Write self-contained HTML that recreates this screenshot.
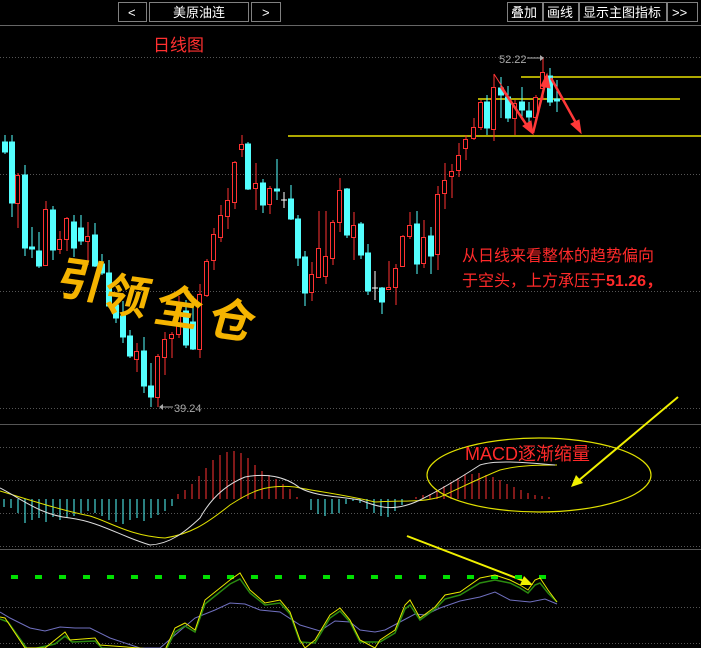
<!DOCTYPE html>
<html><head><meta charset="utf-8">
<style>
html,body{margin:0;padding:0;background:#000;width:701px;height:648px;overflow:hidden}
svg{display:block}
text{font-family:"Liberation Sans","Noto Sans CJK SC",sans-serif}
</style></head><body>
<svg width="701" height="648" viewBox="0 0 701 648" xmlns="http://www.w3.org/2000/svg">
<rect width="701" height="648" fill="#000"/>
<g fill="#000" stroke="#808080" stroke-width="1">
<rect x="118.5" y="2.5" width="28" height="19"/>
<rect x="149.5" y="2.5" width="99" height="19"/>
<rect x="251.5" y="2.5" width="29" height="19"/>
<rect x="507.5" y="2.5" width="35" height="19"/>
<rect x="543.5" y="2.5" width="35" height="19"/>
<rect x="579.5" y="2.5" width="87" height="19"/>
<rect x="667.5" y="2.5" width="30" height="19"/>
</g>
<g fill="#fff" font-size="13">
<text x="128" y="17">&lt;</text>
<text x="173" y="17">美原油连</text>
<text x="262" y="17">&gt;</text>
<text x="511" y="17">叠加</text>
<text x="547" y="17">画线</text>
<text x="583" y="17">显示主图指标</text>
<text x="672" y="17">&gt;&gt;</text>
</g>
<line x1="0" y1="25.5" x2="701" y2="25.5" stroke="#666"/>
<text x="153" y="51" fill="#ff3030" font-size="17">日线图</text>
<g stroke="#555" stroke-dasharray="1,2">
<line x1="0" y1="57.5" x2="701" y2="57.5"/>
<line x1="0" y1="174.5" x2="701" y2="174.5"/>
<line x1="0" y1="291.5" x2="701" y2="291.5"/>
<line x1="0" y1="408.5" x2="701" y2="408.5"/>
<line x1="0" y1="447.5" x2="701" y2="447.5"/>
<line x1="0" y1="480.5" x2="701" y2="480.5"/>
<line x1="0" y1="513.5" x2="701" y2="513.5"/>
<line x1="0" y1="546.5" x2="701" y2="546.5"/>
<line x1="0" y1="607.5" x2="701" y2="607.5"/>
<line x1="0" y1="643.5" x2="701" y2="643.5"/>
</g>
<line x1="0" y1="424.5" x2="701" y2="424.5" stroke="#555"/>
<line x1="0" y1="549.5" x2="701" y2="549.5" stroke="#555"/>
<g stroke="#e8e000" stroke-width="1.5">
<line x1="521" y1="77" x2="701" y2="77"/>
<line x1="478" y1="99" x2="680" y2="99"/>
<line x1="288" y1="136" x2="701" y2="136"/>
</g>
<g stroke-width="1">
<g stroke="#54ffff" fill="#54ffff">
<line x1="5" y1="135" x2="5" y2="154"/><rect x="2.5" y="142" width="5" height="10"/>
<line x1="12" y1="135" x2="12" y2="217"/><rect x="9.5" y="142" width="5" height="61"/>
<line x1="25" y1="165" x2="25" y2="256"/><rect x="22.5" y="175" width="5" height="73"/>
<line x1="32" y1="227" x2="32" y2="258"/><rect x="29.5" y="247" width="5" height="2"/>
<line x1="39" y1="232" x2="39" y2="268"/><rect x="36.5" y="251" width="5" height="15"/>
<line x1="53" y1="206" x2="53" y2="260"/><rect x="50.5" y="210" width="5" height="40"/>
<line x1="74" y1="215" x2="74" y2="257"/><rect x="71.5" y="222" width="5" height="26"/>
<line x1="81" y1="215" x2="81" y2="245"/><rect x="78.5" y="228" width="5" height="13"/>
<line x1="95" y1="223" x2="95" y2="267"/><rect x="92.5" y="235" width="5" height="31"/>
<line x1="102" y1="254" x2="102" y2="275"/><rect x="99.5" y="264" width="5" height="9"/>
<line x1="109" y1="260" x2="109" y2="308"/><rect x="106.5" y="273" width="5" height="33"/>
<line x1="116" y1="301" x2="116" y2="323"/><rect x="113.5" y="305" width="5" height="13"/>
<line x1="123" y1="301" x2="123" y2="343"/><rect x="120.5" y="316" width="5" height="21"/>
<line x1="130" y1="330" x2="130" y2="358"/><rect x="127.5" y="336" width="5" height="20"/>
<line x1="144" y1="337" x2="144" y2="393"/><rect x="141.5" y="351" width="5" height="35"/>
<line x1="151" y1="363" x2="151" y2="407"/><rect x="148.5" y="386" width="5" height="11"/>
<line x1="186" y1="300" x2="186" y2="348"/><rect x="183.5" y="311" width="5" height="34"/>
<line x1="193" y1="296" x2="193" y2="350"/><rect x="190.5" y="322" width="5" height="27"/>
<line x1="248" y1="142" x2="248" y2="190"/><rect x="245.5" y="144" width="5" height="45"/>
<line x1="263" y1="179" x2="263" y2="213"/><rect x="260.5" y="183" width="5" height="22"/>
<line x1="277" y1="159" x2="277" y2="200"/><rect x="274.5" y="189" width="5" height="2"/>
<line x1="291" y1="185" x2="291" y2="220"/><rect x="288.5" y="199" width="5" height="20"/>
<line x1="298" y1="215" x2="298" y2="266"/><rect x="295.5" y="219" width="5" height="39"/>
<line x1="305" y1="251" x2="305" y2="306"/><rect x="302.5" y="257" width="5" height="36"/>
<line x1="347" y1="188" x2="347" y2="238"/><rect x="344.5" y="189" width="5" height="46"/>
<line x1="361" y1="222" x2="361" y2="259"/><rect x="358.5" y="224" width="5" height="31"/>
<line x1="368" y1="244" x2="368" y2="295"/><rect x="365.5" y="253" width="5" height="38"/>
<line x1="382" y1="287" x2="382" y2="314"/><rect x="379.5" y="288" width="5" height="14"/>
<line x1="417" y1="211" x2="417" y2="274"/><rect x="414.5" y="224" width="5" height="40"/>
<line x1="431" y1="227" x2="431" y2="274"/><rect x="428.5" y="236" width="5" height="20"/>
<line x1="487" y1="95" x2="487" y2="135"/><rect x="484.5" y="102" width="5" height="26"/>
<line x1="501" y1="77" x2="501" y2="118"/><rect x="498.5" y="88" width="5" height="7"/>
<line x1="508" y1="86" x2="508" y2="122"/><rect x="505.5" y="97" width="5" height="21"/>
<line x1="522" y1="87" x2="522" y2="120"/><rect x="519.5" y="102" width="5" height="8"/>
<line x1="529" y1="102" x2="529" y2="130"/><rect x="526.5" y="111" width="5" height="6"/>
<line x1="550" y1="68" x2="550" y2="106"/><rect x="547.5" y="76" width="5" height="26"/>
<line x1="557" y1="80" x2="557" y2="112"/><rect x="554.5" y="99" width="5" height="2"/>
</g>
<g stroke="#fff"><line x1="284" y1="192" x2="284" y2="208"/><line x1="281" y1="200" x2="287" y2="200"/>
<line x1="375" y1="271" x2="375" y2="300"/><line x1="372" y1="288" x2="378" y2="288"/></g>
<g stroke="#ff3232" fill="#000">
<line x1="18" y1="173" x2="18" y2="228"/><rect x="15.5" y="175.5" width="4" height="28"/>
<line x1="46" y1="201" x2="46" y2="266"/><rect x="43.5" y="209.5" width="4" height="56"/>
<line x1="60" y1="231" x2="60" y2="254"/><rect x="57.5" y="239.5" width="4" height="10"/>
<line x1="67" y1="217" x2="67" y2="251"/><rect x="64.5" y="218.5" width="4" height="21"/>
<line x1="88" y1="222" x2="88" y2="265"/><rect x="85.5" y="236.5" width="4" height="5"/>
<line x1="137" y1="343" x2="137" y2="372"/><rect x="134.5" y="351.5" width="4" height="8"/>
<line x1="158" y1="354" x2="158" y2="407"/><rect x="155.5" y="356.5" width="4" height="41"/>
<line x1="165" y1="332" x2="165" y2="375"/><rect x="162.5" y="339.5" width="4" height="18"/>
<line x1="172" y1="332" x2="172" y2="358"/><rect x="169.5" y="334.5" width="4" height="4"/>
<line x1="179" y1="296" x2="179" y2="338"/><rect x="176.5" y="305.5" width="4" height="29"/>
<line x1="200" y1="284" x2="200" y2="358"/><rect x="197.5" y="294.5" width="4" height="55"/>
<line x1="207" y1="259" x2="207" y2="297"/><rect x="204.5" y="261.5" width="4" height="34"/>
<line x1="214" y1="228" x2="214" y2="270"/><rect x="211.5" y="234.5" width="4" height="26"/>
<line x1="221" y1="205" x2="221" y2="242"/><rect x="218.5" y="215.5" width="4" height="22"/>
<line x1="228" y1="188" x2="228" y2="229"/><rect x="225.5" y="200.5" width="4" height="16"/>
<line x1="235" y1="161" x2="235" y2="209"/><rect x="232.5" y="162.5" width="4" height="40"/>
<line x1="242" y1="135" x2="242" y2="157"/><rect x="239.5" y="144.5" width="4" height="5"/>
<line x1="256" y1="163" x2="256" y2="210"/><rect x="253.5" y="183.5" width="4" height="5"/>
<line x1="270" y1="186" x2="270" y2="214"/><rect x="267.5" y="188.5" width="4" height="16"/>
<line x1="312" y1="262" x2="312" y2="301"/><rect x="309.5" y="274.5" width="4" height="18"/>
<line x1="319" y1="211" x2="319" y2="278"/><rect x="316.5" y="248.5" width="4" height="29"/>
<line x1="326" y1="211" x2="326" y2="284"/><rect x="323.5" y="256.5" width="4" height="20"/>
<line x1="333" y1="220" x2="333" y2="265"/><rect x="330.5" y="222.5" width="4" height="36"/>
<line x1="340" y1="178" x2="340" y2="232"/><rect x="337.5" y="190.5" width="4" height="32"/>
<line x1="354" y1="212" x2="354" y2="260"/><rect x="351.5" y="225.5" width="4" height="12"/>
<line x1="389" y1="261" x2="389" y2="290"/><rect x="386.5" y="287.5" width="4" height="2"/>
<line x1="396" y1="264" x2="396" y2="305"/><rect x="393.5" y="268.5" width="4" height="19"/>
<line x1="403" y1="235" x2="403" y2="267"/><rect x="400.5" y="236.5" width="4" height="30"/>
<line x1="410" y1="212" x2="410" y2="239"/><rect x="407.5" y="225.5" width="4" height="11"/>
<line x1="424" y1="220" x2="424" y2="268"/><rect x="421.5" y="237.5" width="4" height="26"/>
<line x1="438" y1="186" x2="438" y2="270"/><rect x="435.5" y="194.5" width="4" height="60"/>
<line x1="445" y1="163" x2="445" y2="209"/><rect x="442.5" y="180.5" width="4" height="13"/>
<line x1="452" y1="164" x2="452" y2="198"/><rect x="449.5" y="171.5" width="4" height="5"/>
<line x1="459" y1="143" x2="459" y2="177"/><rect x="456.5" y="155.5" width="4" height="15"/>
<line x1="466" y1="135" x2="466" y2="160"/><rect x="463.5" y="139.5" width="4" height="9"/>
<line x1="474" y1="118" x2="474" y2="140"/><rect x="471.5" y="127.5" width="4" height="11"/>
<line x1="481" y1="100" x2="481" y2="130"/><rect x="478.5" y="102.5" width="4" height="25"/>
<line x1="494" y1="74" x2="494" y2="141"/><rect x="491.5" y="87.5" width="4" height="42"/>
<line x1="515" y1="100" x2="515" y2="135"/><rect x="512.5" y="103.5" width="4" height="15"/>
<line x1="536" y1="95" x2="536" y2="120"/><rect x="533.5" y="97.5" width="4" height="20"/>
<line x1="543" y1="57" x2="543" y2="100"/><rect x="540.5" y="72.5" width="4" height="16"/>
</g>
</g>
<text x="499" y="63" fill="#aaa" font-size="11">52.22</text>
<line x1="527" y1="58" x2="540" y2="58" stroke="#aaa"/><path d="M540 55 L544 58 L540 61Z" fill="#aaa"/>
<text x="174" y="412" fill="#aaa" font-size="11">39.24</text>
<line x1="162" y1="407" x2="173" y2="407" stroke="#aaa"/><path d="M163 404 L159 407 L163 410Z" fill="#aaa"/>
<g stroke="#ff3838" fill="#ff3838">
<line x1="494" y1="74" x2="532" y2="133" stroke-width="1"/>
<line x1="501" y1="87" x2="528" y2="127" stroke-width="2.5"/><path d="M533 134 L523 126 L531 121Z"/>
<line x1="533" y1="133" x2="545" y2="84" stroke-width="2.5"/><path d="M547 74 L550 88 L541 86Z"/>
<line x1="551" y1="78" x2="576" y2="123" stroke-width="2.5"/><path d="M581 133 L571 124 L579 120Z"/>
</g>
<text x="462" y="261" fill="#ff2a2a" font-size="16">从日线来看整体的趋势偏向</text>
<text x="462" y="286" fill="#ff2a2a" font-size="16">于空头，上方承压于<tspan font-weight="bold">51.26，</tspan></text>
<g fill="#f5b400" font-size="46" font-weight="bold" font-family="'Noto Sans CJK SC',sans-serif">
<text x="98" y="302" transform="rotate(8 118 285) skewX(-8)">引</text>
<text x="146" y="318" transform="rotate(8 166 300) skewX(-8)">领</text>
<text x="200" y="330" transform="rotate(8 222 312) skewX(-8)">全</text>
<text x="255" y="343" transform="rotate(8 277 325) skewX(-8)">仓</text>
</g>
<g stroke="#54ffff" stroke-width="1">
<path d="M4 499V507M11 499V508M18 499V513M25 499V523M32 499V520M39 499V518M46 499V522M53 499V517M60 499V520M67 499V518M74 499V516M81 499V513M88 499V511M95 499V513M102 499V516M109 499V520M116 499V522M123 499V524M130 499V520M137 499V518M144 499V521M151 499V518M158 499V515M165 499V511M172 499V506"/>
<path d="M311 499V510M318 499V514M325 499V516M332 499V514M339 499V513M346 499V504M353 499V501M360 499V503M367 499V509M374 499V513M381 499V516M388 499V517M395 499V511M402 499V505"/>
</g>
<g stroke="#ff3232" stroke-width="1">
<path d="M178 499V494M185 499V490M192 499V484M199 499V476M206 499V468M213 499V460M220 499V455M227 499V452M234 499V451M241 499V453M248 499V458M255 499V465M262 499V471M269 499V475M276 499V479M283 499V484M290 499V489M297 499V497"/>
<path d="M416 499V497M423 499V495M430 499V494M437 499V490M444 499V486M451 499V482M458 499V478M465 499V475M472 499V474M479 499V473M486 499V475M493 499V477M500 499V480M507 499V484M514 499V487M521 499V490M528 499V493M535 499V495M542 499V496M549 499V497"/>
</g>
<path d="M0 491 C30 500 60 510 90 516 C110 522 130 536 165 538 C190 534 205 525 230 505 C250 492 265 484 295 487 C320 492 340 494 375 502 C400 500 420 503 440 497 C460 488 480 478 500 470 C520 465 540 465 557 465" fill="none" stroke="#e0e000" stroke-width="1"/>
<path d="M0 488 C20 498 40 515 70 518 C100 522 120 536 150 545 C170 544 185 532 200 518 C210 500 225 485 245 477 C265 473 285 476 300 488 C315 496 335 496 360 500 C380 508 395 512 420 500 C440 490 460 478 480 465 C495 460 520 462 555 465" fill="none" stroke="#ddd" stroke-width="1"/>
<ellipse cx="539" cy="475" rx="112" ry="37" fill="none" stroke="#e0e000" stroke-width="1.2"/>
<text x="465" y="460" fill="#ff2a2a" font-size="18">MACD逐渐缩量</text>
<line x1="678" y1="397" x2="578" y2="481" stroke="#f0f000" stroke-width="2"/><path d="M571 487 L576 475 L583 483Z" fill="#f0f000"/>
<line x1="407" y1="536" x2="524" y2="581" stroke="#f0f000" stroke-width="2"/><path d="M533 585 L520 585 L524 576Z" fill="#f0f000"/>
<g fill="#00e000">
<rect x="11" y="575" width="7" height="4"/><rect x="35" y="575" width="7" height="4"/><rect x="59" y="575" width="7" height="4"/><rect x="83" y="575" width="7" height="4"/><rect x="107" y="575" width="7" height="4"/><rect x="131" y="575" width="7" height="4"/><rect x="155" y="575" width="7" height="4"/><rect x="179" y="575" width="7" height="4"/><rect x="203" y="575" width="7" height="4"/><rect x="227" y="575" width="7" height="4"/><rect x="251" y="575" width="7" height="4"/><rect x="275" y="575" width="7" height="4"/><rect x="299" y="575" width="7" height="4"/><rect x="323" y="575" width="7" height="4"/><rect x="347" y="575" width="7" height="4"/><rect x="371" y="575" width="7" height="4"/><rect x="395" y="575" width="7" height="4"/><rect x="419" y="575" width="7" height="4"/><rect x="443" y="575" width="7" height="4"/><rect x="467" y="575" width="7" height="4"/><rect x="491" y="575" width="7" height="4"/><rect x="515" y="575" width="7" height="4"/><rect x="539" y="575" width="7" height="4"/>
</g>
<polyline fill="none" stroke="#7070c0" stroke-width="1" points="0,612 10,618 30,628 45,631 60,627 75,628 90,628 110,638 140,648 160,648 175,635 195,618 215,610 230,603 245,604 260,610 280,612 300,625 320,631 335,621 350,622 360,630 375,632 385,630 400,622 415,614 425,615 440,608 460,601 480,597 495,592 510,600 530,602 545,599 557,604"/>
<polyline fill="none" stroke="#2a8a10" stroke-width="1.5" points="0,619 8,622 18,636 28,650 55,644 65,636 72,642 95,641 102,648 165,652 175,632 185,626 195,632 205,604 215,596 230,584 240,579 250,593 265,605 280,603 290,614 300,642 315,643 330,618 340,611 350,622 360,642 380,642 395,633 405,609 410,605 420,620 435,609 445,599 460,595 480,583 495,580 510,583 520,588 528,593 535,585 540,583 548,593 557,602"/>
<polyline fill="none" stroke="#e8e800" stroke-width="1" points="0,617 5,618 15,633 25,648 45,648 55,640 65,632 70,640 95,638 100,645 165,650 175,628 185,623 195,630 205,600 215,592 230,580 240,573 250,590 265,603 280,600 290,612 300,640 305,648 315,640 330,615 340,608 350,620 360,640 375,648 380,640 395,630 405,605 410,600 420,618 435,607 445,595 460,592 480,578 495,575 510,580 520,585 528,590 535,580 540,578 548,590 557,602"/>
</svg>
</body></html>
